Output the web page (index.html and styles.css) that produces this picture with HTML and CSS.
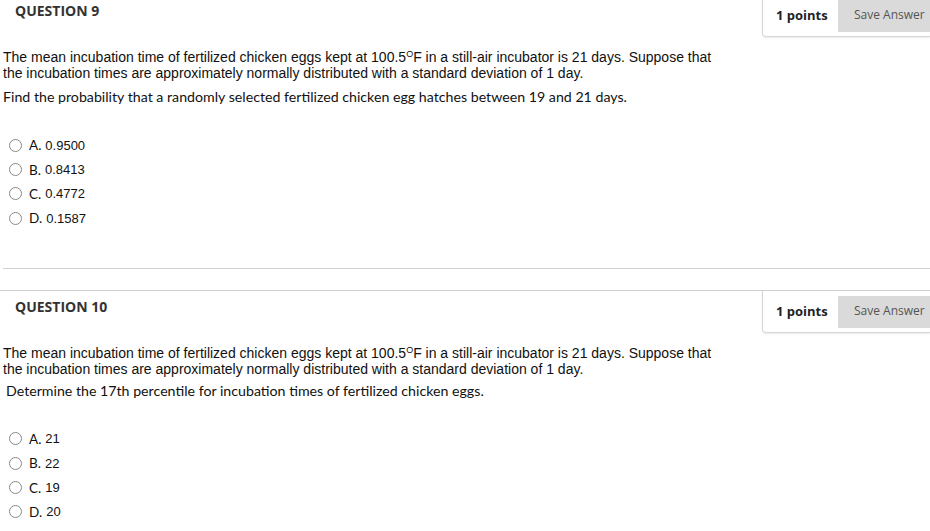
FILE: index.html
```html
<!DOCTYPE html>
<html>
<head>
<meta charset="utf-8">
<link rel="stylesheet" href="styles.css">
</head>
<body>
<div class="page">
  <section class="question first">
    <div class="q-header">
      <h3 class="q-title">QUESTION 9</h3>
      <div class="points-box">
        <span class="points">1 points</span>
        <span class="save">Save Answer</span>
      </div>
    </div>
    <div class="q-body">
      <p class="stem">The mean incubation time of fertilized chicken eggs kept at 100.5<sup>O</sup>F in a still-air incubator is 21 days. Suppose that the incubation times are approximately normally distributed with a standard deviation of 1 day.</p>
      <p class="prompt">Find the probability that a randomly selected fertilized chicken egg hatches between 19 and 21 days.</p>
      <ul class="options">
        <li><span class="radio"></span><span class="letter">A.</span><span class="val">0.9500</span></li>
        <li><span class="radio"></span><span class="letter">B.</span><span class="val">0.8413</span></li>
        <li><span class="radio"></span><span class="letter">C.</span><span class="val">0.4772</span></li>
        <li><span class="radio"></span><span class="letter">D.</span><span class="val">0.1587</span></li>
      </ul>
    </div>
    <hr class="sep">
  </section>
  <section class="question">
    <div class="q-header">
      <h3 class="q-title">QUESTION 10</h3>
      <div class="points-box">
        <span class="points">1 points</span>
        <span class="save">Save Answer</span>
      </div>
    </div>
    <div class="q-body">
      <p class="stem">The mean incubation time of fertilized chicken eggs kept at 100.5<sup>O</sup>F in a still-air incubator is 21 days. Suppose that the incubation times are approximately normally distributed with a standard deviation of 1 day.</p>
      <p class="prompt indent">Determine the 17th percentile for incubation times of fertilized chicken eggs.</p>
      <ul class="options">
        <li><span class="radio"></span><span class="letter">A.</span><span class="val">21</span></li>
        <li><span class="radio"></span><span class="letter">B.</span><span class="val">22</span></li>
        <li><span class="radio"></span><span class="letter">C.</span><span class="val">19</span></li>
        <li><span class="radio"></span><span class="letter">D.</span><span class="val">20</span></li>
      </ul>
    </div>
  </section>
</div>
</body>
</html>
```
FILE: styles.css
```css
html, body {
  margin: 0;
  padding: 0;
  background: #fff;
  overflow: hidden;
}
.page {
  width: 930px;
  margin-top: -5px;
}
.question {
  border-top: 1px solid #d0d0d0;
}
.question.first {
  border-top: 0;
}
.q-header {
  display: flex;
  justify-content: space-between;
  align-items: flex-start;
  height: 42px;
}
.q-title {
  margin: 0;
  padding: 6px 0 0 15px;
  font-family: "Open Sans", sans-serif;
  font-weight: 700;
  font-size: 14px;
  line-height: 20px;
  color: #333;
}
.points-box {
  display: flex;
  align-items: center;
  height: 32px;
  padding: 5px 0 4px 13px;
  border-left: 1px solid #d6d6d6;
  border-bottom: 1px solid #d6d6d6;
  border-bottom-left-radius: 4px;
  box-shadow: 0 1px 2px rgba(0,0,0,0.08);
  width: 154px;
}
.points {
  font-family: "Open Sans", sans-serif;
  font-weight: 700;
  font-size: 13px;
  line-height: 30px;
  align-self: flex-start;
  color: #222;
  width: 62px;
}
.save {
  flex: 1;
  height: 32px;
  line-height: 30px;
  background: #dadada;
  font-family: "Open Sans", sans-serif;
  font-size: 12px;
  color: #555;
  padding-left: 16px;
}
.q-body {
  padding: 12px 0 0 3px;
}
.stem {
  margin: 0;
  font-family: "Liberation Sans", Arial, sans-serif;
  font-size: 14px;
  line-height: 16px;
  color: #111;
  width: 715px;
}
.stem sup {
  font-size: 9px;
  line-height: 0;
  vertical-align: 5px;
}
.prompt {
  margin: 7px 0 0;
  font-family: Lato, sans-serif;
  font-size: 14.2px;
  line-height: 18px;
  color: #111;
}
.prompt.indent {
  padding-left: 3px;
  margin-top: 5px;
}
.options {
  list-style: none;
  margin: 27px 0 0;
  padding: 0;
}
.options li {
  display: flex;
  align-items: center;
  height: 24.4px;
  color: #111;
}
.radio {
  width: 11px;
  height: 11px;
  border: 1px solid #8a8a8a;
  border-radius: 50%;
  margin: 0 7px 0 6px;
  flex: none;
}
.letter {
  font-family: Lato, sans-serif;
  font-size: 13.5px;
  margin-right: 4px;
}
.val {
  font-family: "Liberation Sans", Arial, sans-serif;
  font-size: 13px;
}
.sep {
  margin: 37px 0 0 3px;
  border: 0;
  border-top: 1px solid #d0d0d0;
  height: 0;
  margin-bottom: 21px;
}
```
